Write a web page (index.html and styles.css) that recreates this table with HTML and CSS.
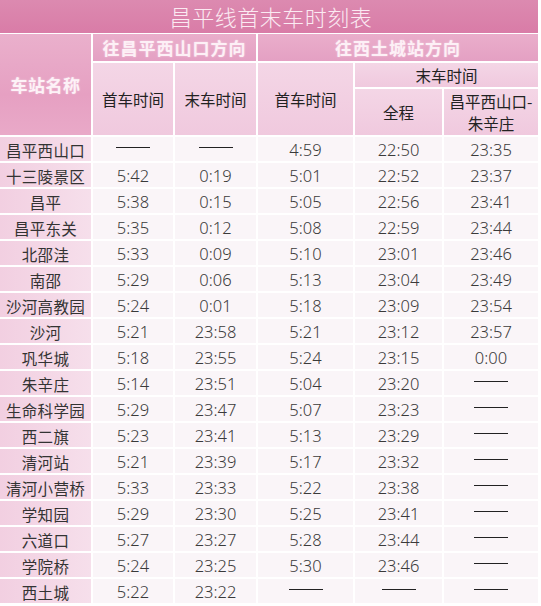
FILE: index.html
```html
<!DOCTYPE html>
<html lang="zh-CN">
<head>
<meta charset="utf-8">
<title>昌平线首末车时刻表</title>
<link rel="stylesheet" href="styles.css">
</head>
<body>
<div class="sheet">
  <div class="title">昌平线首末车时刻表</div>
  <div class="grid">
    <div class="h-main station-head">车站名称</div>
    <div class="h-dir dir-a">往昌平西山口方向</div>
    <div class="h-dir dir-b">往西土城站方向</div>
    <div class="h-sub c2">首车时间</div>
    <div class="h-sub c3">末车时间</div>
    <div class="h-sub c4">首车时间</div>
    <div class="h-sub c56">末车时间</div>
    <div class="h-sub c5">全程</div>
    <div class="h-sub c6 two">昌平西山口-<br>朱辛庄</div>

    <div class="st">昌平西山口</div><div class="d"><span class="dash"></span></div><div class="d"><span class="dash"></span></div><div class="d">4:59</div><div class="d">22:50</div><div class="d">23:35</div>
    <div class="st">十三陵景区</div><div class="d">5:42</div><div class="d">0:19</div><div class="d">5:01</div><div class="d">22:52</div><div class="d">23:37</div>
    <div class="st">昌平</div><div class="d">5:38</div><div class="d">0:15</div><div class="d">5:05</div><div class="d">22:56</div><div class="d">23:41</div>
    <div class="st">昌平东关</div><div class="d">5:35</div><div class="d">0:12</div><div class="d">5:08</div><div class="d">22:59</div><div class="d">23:44</div>
    <div class="st">北邵洼</div><div class="d">5:33</div><div class="d">0:09</div><div class="d">5:10</div><div class="d">23:01</div><div class="d">23:46</div>
    <div class="st">南邵</div><div class="d">5:29</div><div class="d">0:06</div><div class="d">5:13</div><div class="d">23:04</div><div class="d">23:49</div>
    <div class="st">沙河高教园</div><div class="d">5:24</div><div class="d">0:01</div><div class="d">5:18</div><div class="d">23:09</div><div class="d">23:54</div>
    <div class="st">沙河</div><div class="d">5:21</div><div class="d">23:58</div><div class="d">5:21</div><div class="d">23:12</div><div class="d">23:57</div>
    <div class="st">巩华城</div><div class="d">5:18</div><div class="d">23:55</div><div class="d">5:24</div><div class="d">23:15</div><div class="d">0:00</div>
    <div class="st">朱辛庄</div><div class="d">5:14</div><div class="d">23:51</div><div class="d">5:04</div><div class="d">23:20</div><div class="d"><span class="dash"></span></div>
    <div class="st">生命科学园</div><div class="d">5:29</div><div class="d">23:47</div><div class="d">5:07</div><div class="d">23:23</div><div class="d"><span class="dash"></span></div>
    <div class="st">西二旗</div><div class="d">5:23</div><div class="d">23:41</div><div class="d">5:13</div><div class="d">23:29</div><div class="d"><span class="dash"></span></div>
    <div class="st">清河站</div><div class="d">5:21</div><div class="d">23:39</div><div class="d">5:17</div><div class="d">23:32</div><div class="d"><span class="dash"></span></div>
    <div class="st">清河小营桥</div><div class="d">5:33</div><div class="d">23:33</div><div class="d">5:22</div><div class="d">23:38</div><div class="d"><span class="dash"></span></div>
    <div class="st">学知园</div><div class="d">5:29</div><div class="d">23:30</div><div class="d">5:25</div><div class="d">23:41</div><div class="d"><span class="dash"></span></div>
    <div class="st">六道口</div><div class="d">5:27</div><div class="d">23:27</div><div class="d">5:28</div><div class="d">23:44</div><div class="d"><span class="dash"></span></div>
    <div class="st">学院桥</div><div class="d">5:24</div><div class="d">23:25</div><div class="d">5:30</div><div class="d">23:46</div><div class="d"><span class="dash"></span></div>
    <div class="st">西土城</div><div class="d">5:22</div><div class="d">23:22</div><div class="d"><span class="dash"></span></div><div class="d"><span class="dash"></span></div><div class="d"><span class="dash"></span></div>
  </div>
</div>
</body>
</html>
```

FILE: styles.css
```css
html, body {
  margin: 0;
  padding: 0;
  background: #ffffff;
}

body {
  font-family: "Noto Sans", "Noto Sans CJK SC", sans-serif;
  color: #333333;
}

.sheet {
  width: 538px;
}

.title {
  height: 33px;
  line-height: 33px;
  text-align: center;
  font-family: "Noto Sans CJK SC", sans-serif;
  font-size: 22px;
  font-weight: 300;
  color: #fbeaf2;
  letter-spacing: 0.5px;
  padding-left: 4px;
  background: linear-gradient(180deg, #dc8ab0 0%, #d97ca7 100%);
}

.grid {
  margin-top: 1px;
  display: grid;
  grid-template-columns: 91px 80px 81px 95px 87px 94px;
  grid-template-rows: 27px 24px 46px repeat(18, 24px);
  gap: 2px;
  background: #ffffff;
}

.grid > div {
  display: flex;
  align-items: center;
  justify-content: center;
  text-align: center;
}

.h-main {
  grid-column: 1;
  grid-row: 1 / 4;
  background: linear-gradient(180deg, #eab0cc 0%, #e6a0c2 60%, #e9a9c8 100%);
  color: #fdf2f7;
  font-family: "Noto Sans CJK SC", sans-serif;
  font-weight: 700;
  font-size: 17px;
  letter-spacing: 0.5px;
  text-shadow: 0 0 2px rgba(255, 255, 255, 0.5);
}

.h-dir {
  grid-row: 1;
  background: linear-gradient(180deg, #eaaecb 0%, #e4a0c3 100%);
  color: #fdf0f6;
  font-family: "Noto Sans CJK SC", sans-serif;
  font-weight: 700;
  font-size: 17px;
  letter-spacing: 1px;
  text-shadow: 0 0 2px rgba(255, 255, 255, 0.5);
}

.dir-a { grid-column: 2 / 4; }
.dir-b { grid-column: 4 / 7; }

.h-sub {
  background: linear-gradient(180deg, #f4d6e6 0%, #f0c9de 100%);
  color: #222222;
  font-family: "Noto Sans CJK SC", sans-serif;
  font-size: 15.5px;
}

.c2 { grid-column: 2; grid-row: 2 / 4; }
.c3 { grid-column: 3; grid-row: 2 / 4; }
.c4 { grid-column: 4; grid-row: 2 / 4; }
.c56 { grid-column: 5 / 7; grid-row: 2; }
.c5 { grid-column: 5; grid-row: 3; }
.c6 { grid-column: 6; grid-row: 3; }

.two {
  line-height: 22px;
}

.st {
  background: linear-gradient(90deg, #f2cfe1 0%, #f6dfeb 100%);
  font-family: "Noto Sans CJK SC", sans-serif;
  font-size: 15.5px;
  letter-spacing: 0.3px;
  color: #333333;
  padding-top: 1px;
}

.d {
  background: #faf5f8;
  font-size: 16.5px;
  font-weight: 300;
  color: #3a3a3a;
  padding-top: 1px;
}

.dash {
  display: inline-block;
  width: 34px;
  height: 0;
  border-top: 1px solid #222222;
  margin-top: -4px;
}
```
